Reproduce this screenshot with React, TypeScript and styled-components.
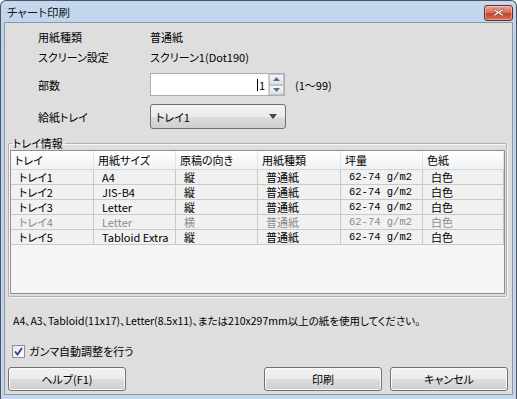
import React from "react";
import styled, { createGlobalStyle } from "styled-components";

const Global = createGlobalStyle`
  html, body { margin: 0; padding: 0; background: #ffffff; }
  body { font-family: "Noto Sans CJK JP", "Noto Sans", sans-serif; font-size: 11px; color: #000; }
  * { box-sizing: border-box; }
`;

const Window = styled.div`
  width: 517px;
  height: 399px;
  display: flex;
  flex-direction: column;
  background: linear-gradient(#c5d8ee, #bcd1ea 40px, #c3d6ec);
  border: 1px solid #4b5663;
  border-bottom: none;
  border-radius: 6px 6px 0 0;
  overflow: hidden;
  font-feature-settings: "palt";
`;

const TitleBar = styled.div`
  height: 21px;
  display: flex;
  align-items: center;
  justify-content: space-between;
  padding: 0 3px 0 6px;
  flex: none;
`;

const Title = styled.span`
  font-size: 11.5px;
  color: #101820;
`;

const CloseButton = styled.div`
  width: 29px;
  height: 16px;
  margin-top: 2px;
  border: 1px solid #6b2b20;
  border-radius: 3px;
  background: linear-gradient(#e8a593, #d8745d 45%, #c4432b 55%, #d7725a);
  display: flex;
  align-items: center;
  justify-content: center;
  box-shadow: inset 0 0 0 1px rgba(255, 255, 255, 0.35);
`;

const Client = styled.div`
  flex: 1;
  margin: 0 3px 4px 3px;
  background: #dedede;
  border: 1px solid #8b98a6;
  display: flex;
  flex-direction: column;
  position: relative;
`;

const InfoBlock = styled.div`
  display: flex;
  flex-direction: column;
  padding: 5px 0 0 33px;
`;

const InfoRow = styled.div<{ $h: number; $mt?: number }>`
  display: flex;
  align-items: center;
  height: ${(p) => p.$h}px;
  margin-top: ${(p) => p.$mt ?? 0}px;
`;

const Label = styled.span`
  width: 112px;
  flex: none;
`;

const Value = styled.span``;

const NumberBox = styled.div`
  width: 135px;
  height: 23px;
  display: flex;
  border: 1px solid #abadb3;
  background: #fff;
`;

const NumberText = styled.div`
  flex: 1;
  display: flex;
  align-items: center;
  justify-content: flex-end;
  padding-right: 3px;
  font-size: 11px;
`;

const Caret = styled.span`
  display: inline-block;
  width: 1px;
  height: 12px;
  background: #000;
  margin-right: 1px;
`;

const Spinner = styled.div`
  width: 16px;
  display: flex;
  flex-direction: column;
  border-left: 1px solid #d0d0d0;
`;

const SpinHalf = styled.div`
  flex: 1;
  display: flex;
  align-items: center;
  justify-content: center;
  background: linear-gradient(#f6f6f6, #e2e2e2);
  border: 1px solid #c2c2c2;
`;

const RangeText = styled.span`
  margin-left: 10px;
`;

const Select = styled.div`
  width: 136px;
  height: 25px;
  border: 1px solid #707070;
  border-radius: 3px;
  background: linear-gradient(#f3f3f3, #ebebeb 50%, #dddddd 51%, #cfcfcf);
  display: flex;
  align-items: center;
  justify-content: space-between;
  padding: 0 8px 0 5px;
`;

const Group = styled.fieldset`
  margin: 7px 5px 0 3px;
  padding: 0 1px 2px 1px;
  border: 1px solid #b0b0b0;
  border-radius: 2px;
  box-shadow: inset 1px 1px 0 #f6f6f6, 1px 1px 0 #f6f6f6;
  min-width: 0;
`;

const Legend = styled.legend`
  padding: 0 2px 0 1px;
  margin-left: 2px;
  font-size: 11px;
  line-height: 14px;
`;

const Table = styled.div`
  height: 144px;
  border: 1px solid #8e8f8f;
  background: #f5f5f5;
  display: flex;
  flex-direction: column;
`;

const cols = [83, 82, 82, 83, 82, 81];

const HeaderRow = styled.div`
  display: flex;
  height: 19px;
  background: linear-gradient(#ffffff, #f7f8f9 50%, #f1f2f4);
  border-bottom: 1px solid #d5d5d5;
`;

const HeaderCell = styled.div<{ $w: number }>`
  width: ${(p) => p.$w}px;
  flex: none;
  display: flex;
  align-items: center;
  padding-left: 4px;
  border-right: 1px solid #e3e4e6;
`;

const Row = styled.div<{ $dim?: boolean }>`
  display: flex;
  height: 15px;
  background: #f1f1f1;
  color: ${(p) => (p.$dim ? "#8c8c8c" : "#000")};
  border-bottom: 1px solid #c9c9c9;
  width: 493px;
`;

const Cell = styled.div<{ $w: number; $mono?: boolean }>`
  width: ${(p) => p.$w}px;
  flex: none;
  display: flex;
  align-items: center;
  padding-left: 8px;
  border-right: 1px solid #c9c9c9;
  font-family: ${(p) =>
    p.$mono ? '"Liberation Mono", monospace' : "inherit"};
  font-size: ${(p) => (p.$mono ? "10.5px" : "11px")};
  line-height: 14px;
`;

const Note = styled.div`
  margin: 18px 0 0 8px;
  height: 12px;
  line-height: 12px;
  font-size: 10.5px;
`;

const CheckRow = styled.label`
  display: flex;
  align-items: center;
  margin: 16px 0 0 7px;
  gap: 4px;
  font-size: 11px;
`;

const CheckBox = styled.span`
  width: 13px;
  height: 13px;
  border: 1px solid #8f8f8f;
  background: linear-gradient(135deg, #e6e6e6, #ffffff);
  display: flex;
  align-items: center;
  justify-content: center;
`;

const ButtonBar = styled.div`
  display: flex;
  margin: 8px 4px 0 3px;
  gap: 8px;
`;

const Button = styled.div<{ $push?: boolean }>`
  width: 118px;
  height: 24px;
  border: 1px solid #707070;
  border-radius: 3px;
  background: linear-gradient(#f2f2f2, #ebebeb 50%, #dddddd 51%, #cfcfcf);
  box-shadow: inset 0 0 0 1px #fbfbfb;
  display: flex;
  align-items: center;
  justify-content: center;
  margin-left: ${(p) => (p.$push ? "auto" : "0")};
`;

const rows = [
  { t: "トレイ1", s: "A4", o: "縦", k: "普通紙", w: "62-74 g/m2", c: "白色" },
  { t: "トレイ2", s: "JIS-B4", o: "縦", k: "普通紙", w: "62-74 g/m2", c: "白色" },
  { t: "トレイ3", s: "Letter", o: "縦", k: "普通紙", w: "62-74 g/m2", c: "白色" },
  { t: "トレイ4", s: "Letter", o: "横", k: "普通紙", w: "62-74 g/m2", c: "白色", dim: true },
  { t: "トレイ5", s: "Tabloid Extra", o: "縦", k: "普通紙", w: "62-74 g/m2", c: "白色" },
];

const headers = ["トレイ", "用紙サイズ", "原稿の向き", "用紙種類", "坪量", "色紙"];

export default function App() {
  return (
    <>
      <Global />
      <Window>
        <TitleBar>
          <Title>チャート印刷</Title>
          <CloseButton>
            <svg width="11" height="9" viewBox="0 0 11 9">
              <path
                d="M1 0.5 L5.5 3.5 L10 0.5 L10.5 2 L7.3 4.5 L10.5 7 L10 8.5 L5.5 5.5 L1 8.5 L0.5 7 L3.7 4.5 L0.5 2 Z"
                fill="#ffffff"
                stroke="#7a3326"
                strokeWidth="0.6"
              />
            </svg>
          </CloseButton>
        </TitleBar>
        <Client>
          <InfoBlock>
            <InfoRow $h={18}>
              <Label>用紙種類</Label>
              <Value>普通紙</Value>
            </InfoRow>
            <InfoRow $h={22}>
              <Label>スクリーン設定</Label>
              <Value>スクリーン1(Dot190)</Value>
            </InfoRow>
            <InfoRow $h={23} $mt={5}>
              <Label>部数</Label>
              <NumberBox>
                <NumberText>
                  <Caret />1
                </NumberText>
                <Spinner>
                  <SpinHalf>
                    <svg width="7" height="4" viewBox="0 0 7 4">
                      <path d="M0 4 L3.5 0 L7 4 Z" fill="#4a6fa8" />
                    </svg>
                  </SpinHalf>
                  <SpinHalf>
                    <svg width="7" height="4" viewBox="0 0 7 4">
                      <path d="M0 0 L3.5 4 L7 0 Z" fill="#4a6fa8" />
                    </svg>
                  </SpinHalf>
                </Spinner>
              </NumberBox>
              <RangeText>(1〜99)</RangeText>
            </InfoRow>
            <InfoRow $h={25} $mt={8}>
              <Label>給紙トレイ</Label>
              <Select>
                <span>トレイ1</span>
                <svg width="8" height="5" viewBox="0 0 8 5">
                  <path d="M0 0 L8 0 L4 5 Z" fill="#444" />
                </svg>
              </Select>
            </InfoRow>
          </InfoBlock>
          <Group>
            <Legend>トレイ情報</Legend>
            <Table>
              <HeaderRow>
                {headers.map((h, i) => (
                  <HeaderCell key={h} $w={cols[i]}>
                    {h}
                  </HeaderCell>
                ))}
              </HeaderRow>
              {rows.map((r) => (
                <Row key={r.t} $dim={r.dim}>
                  <Cell $w={cols[0]}>{r.t}</Cell>
                  <Cell $w={cols[1]}>{r.s}</Cell>
                  <Cell $w={cols[2]}>{r.o}</Cell>
                  <Cell $w={cols[3]}>{r.k}</Cell>
                  <Cell $w={cols[4]} $mono>
                    {r.w}
                  </Cell>
                  <Cell $w={cols[5]}>{r.c}</Cell>
                </Row>
              ))}
            </Table>
          </Group>
          <Note>
            A4、A3、Tabloid(11x17)、Letter(8.5x11)、または210x297mm以上の紙を使用してください。
          </Note>
          <CheckRow>
            <CheckBox>
              <svg width="9" height="9" viewBox="0 0 9 9">
                <path
                  d="M1 4.5 L3.5 7.5 L8 1"
                  fill="none"
                  stroke="#2a3f8f"
                  strokeWidth="1.8"
                />
              </svg>
            </CheckBox>
            ガンマ自動調整を行う
          </CheckRow>
          <ButtonBar>
            <Button>ヘルプ(F1)</Button>
            <Button $push>印刷</Button>
            <Button>キャンセル</Button>
          </ButtonBar>
        </Client>
      </Window>
    </>
  );
}
